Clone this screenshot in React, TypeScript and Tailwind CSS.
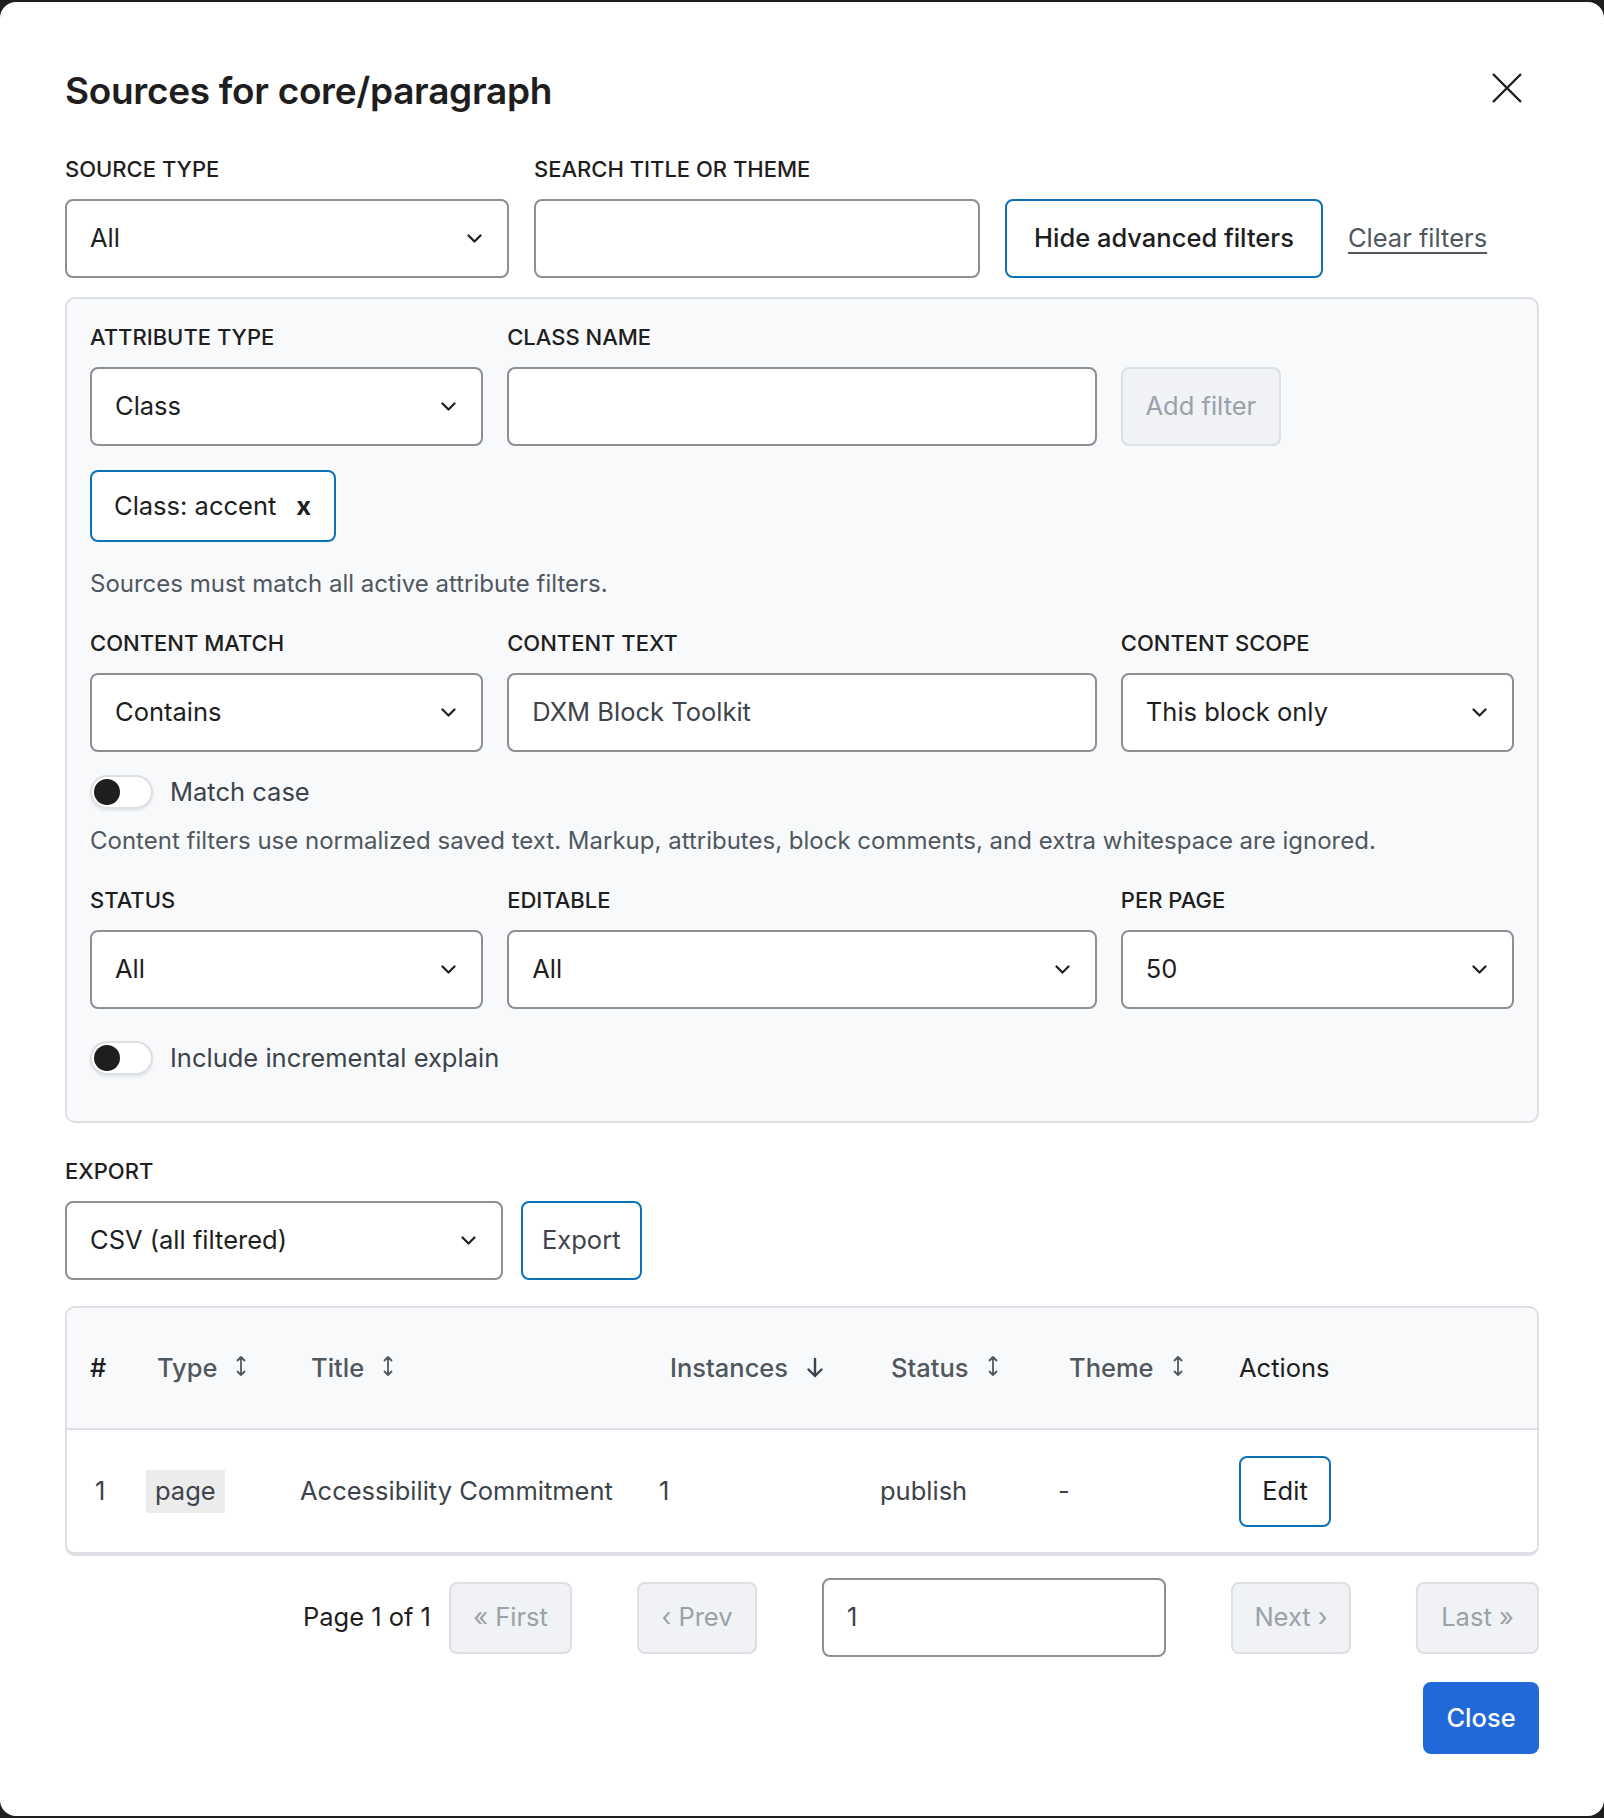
import React from "react";

const font = { fontFamily: "Inter, 'Noto Sans', sans-serif" };

function Chevron() {
  return (
    <svg width="15" height="9" viewBox="0 0 15 9" fill="none">
      <path d="M1.5 1.5l6 6 6-6" stroke="#1e1e1e" strokeWidth="2.2" strokeLinecap="round" strokeLinejoin="round" />
    </svg>
  );
}

function SortIcon() {
  return (
    <svg width="12" height="22" viewBox="0 0 12 22" fill="none" className="-mt-[4px]">
      <path d="M6 2v18M2.5 5.5L6 2l3.5 3.5M2.5 16.5L6 20l3.5-3.5" stroke="#50575e" strokeWidth="1.8" strokeLinecap="round" strokeLinejoin="round" />
    </svg>
  );
}

function DownArrow() {
  return (
    <svg width="18" height="22" viewBox="0 0 18 22" fill="none">
      <path d="M9 2v17M2.5 12.5L9 19l6.5-6.5" stroke="#3c434a" strokeWidth="2.4" strokeLinecap="round" strokeLinejoin="round" />
    </svg>
  );
}

function Label({ children }: { children: React.ReactNode }) {
  return (
    <div className="text-[22px] leading-[24px] font-medium uppercase text-[#1e1e1e] mb-[18px]">
      {children}
    </div>
  );
}

function Select({ value, className = "" }: { value: string; className?: string }) {
  return (
    <div
      className={`h-[79px] flex items-center justify-between pl-[23px] pr-[25px] bg-white border-2 border-[#8c8f94] rounded-[8px] text-[25.5px] text-[#1e1e1e] ${className}`}
    >
      <span>{value}</span>
      <Chevron />
    </div>
  );
}

function TextInput({ value = "", className = "" }: { value?: string; className?: string }) {
  return (
    <div
      className={`h-[79px] flex items-center pl-[23px] bg-white border-2 border-[#8c8f94] rounded-[8px] text-[25.5px] text-[#3c434a] ${className}`}
    >
      {value}
    </div>
  );
}

function Toggle({ label }: { label: string }) {
  return (
    <div className="flex items-center gap-[17px] h-[34px]">
      <div className="w-[63px] h-[34px] rounded-full bg-white border-2 border-[#dcdfe3] shadow-[0_2px_3px_rgba(0,0,0,0.08)] flex items-center pl-[2px]">
        <div className="w-[26px] h-[26px] rounded-full bg-[#1e1e1e]" />
      </div>
      <span className="text-[25.5px] leading-[34px] text-[#3c434a]">{label}</span>
    </div>
  );
}

function PageButton({ children, w }: { children: React.ReactNode; w: string }) {
  return (
    <div className={`h-[72px] ${w} flex items-center justify-center bg-[#f0f2f5] border-2 border-[#dcdfe3] rounded-[8px] text-[25.5px] text-[#9aa1a9]`}>
      {children}
    </div>
  );
}

function SortHeader({ label, icon }: { label: string; icon?: React.ReactNode }) {
  return (
    <div className="flex items-center gap-[18px] pl-[11px] text-[25.5px] font-medium text-[#50575e]">
      <span>{label}</span>
      {icon ?? <SortIcon />}
    </div>
  );
}

export default function App() {
  return (
    <div className="bg-[#1e1e1e] pt-[2px] min-h-[1818px]" style={font}>
      <div className="bg-white rounded-[16px] h-[1814px] px-[65px] pt-[68px]">
        {/* header */}
        <div className="flex items-start justify-between">
          <h1 className="text-[37px] leading-[42px] font-semibold text-[#1e1e1e] tracking-[-0.3px]">
            Sources for core/paragraph
          </h1>
          <button className="mr-[16px] mt-[2px]">
            <svg width="32" height="32" viewBox="0 0 32 32" fill="none">
              <path d="M2 2l28 28M30 2L2 30" stroke="#1e1e1e" strokeWidth="2.4" />
            </svg>
          </button>
        </div>

        {/* basic filters */}
        <div className="flex items-end gap-[25px] mt-[45px]">
          <div className="w-[444px]">
            <Label>Source type</Label>
            <Select value="All" />
          </div>
          <div className="w-[446px]">
            <Label>Search title or theme</Label>
            <TextInput />
          </div>
          <button className="h-[79px] px-[27px] border-2 border-[#0a73b7] rounded-[8px] bg-white text-[25.5px] font-medium text-[#1e1e1e]">
            Hide advanced filters
          </button>
          <a className="h-[79px] flex items-center text-[25.5px] text-[#50575e] underline underline-offset-[5px]">
            Clear filters
          </a>
        </div>

        {/* advanced panel */}
        <div className="mt-[19px] bg-[#f8f9fa] border-2 border-[#dcdfe3] rounded-[10px] px-[23px] pt-[26px] pb-[46px]">
          <div className="grid grid-cols-[2fr_3fr_2fr] gap-x-[24px] items-end">
            <div>
              <Label>Attribute type</Label>
              <Select value="Class" />
            </div>
            <div>
              <Label>Class name</Label>
              <TextInput />
            </div>
            <div>
              <button className="h-[79px] w-[160px] bg-[#f0f2f5] border-2 border-[#dcdfe3] rounded-[8px] text-[25.5px] text-[#9aa1a9]">
                Add filter
              </button>
            </div>
          </div>

          <div className="mt-[24px] inline-flex items-center gap-[20px] h-[72px] pl-[22px] pr-[23px] bg-white border-2 border-[#0a73b7] rounded-[8px] text-[25.5px] text-[#1e1e1e]">
            <span>Class: accent</span>
            <span className="font-bold">x</span>
          </div>

          <p className="mt-[28px] text-[24px] leading-[28px] text-[#50575e]">
            Sources must match all active attribute filters.
          </p>

          <div className="mt-[33px] grid grid-cols-[2fr_3fr_2fr] gap-x-[24px]">
            <div>
              <Label>Content match</Label>
              <Select value="Contains" />
            </div>
            <div>
              <Label>Content text</Label>
              <TextInput value="DXM Block Toolkit" />
            </div>
            <div>
              <Label>Content scope</Label>
              <Select value="This block only" />
            </div>
          </div>

          <div className="mt-[23px]">
            <Toggle label="Match case" />
          </div>

          <p className="mt-[18px] text-[24px] leading-[28px] text-[#50575e]">
            Content filters use normalized saved text. Markup, attributes, block comments, and extra whitespace are ignored.
          </p>

          <div className="mt-[33px] grid grid-cols-[2fr_3fr_2fr] gap-x-[24px]">
            <div>
              <Label>Status</Label>
              <Select value="All" />
            </div>
            <div>
              <Label>Editable</Label>
              <Select value="All" />
            </div>
            <div>
              <Label>Per page</Label>
              <Select value="50" />
            </div>
          </div>

          <div className="mt-[32px]">
            <Toggle label="Include incremental explain" />
          </div>
        </div>

        {/* export */}
        <div className="mt-[36px]">
          <Label>Export</Label>
          <div className="flex gap-[18px]">
            <Select value="CSV (all filtered)" className="w-[438px]" />
            <button className="h-[79px] px-[19px] border-2 border-[#0a73b7] rounded-[8px] bg-white text-[25.5px] text-[#3c434a]">
              Export
            </button>
          </div>
        </div>

        {/* table */}
        <div className="mt-[26px] border-2 border-b-[4px] border-[#dcdfe3] rounded-[10px] overflow-hidden">
          <div className="grid grid-cols-[56px_154px_359px_221px_178px_181px_1fr] items-center h-[122px] px-[23px] bg-[#f8f9fa] border-b-2 border-[#dcdfe3]">
            <div className="text-[25.5px] font-medium text-[#1e1e1e]">#</div>
            <SortHeader label="Type" />
            <SortHeader label="Title" />
            <SortHeader label="Instances" icon={<DownArrow />} />
            <SortHeader label="Status" />
            <SortHeader label="Theme" />
            <div className="text-[25.5px] text-[#1e1e1e]">Actions</div>
          </div>
          <div className="grid grid-cols-[56px_154px_359px_221px_178px_181px_1fr] items-center h-[122px] px-[23px] bg-white text-[25.5px] text-[#3c434a]">
            <div className="pl-[5px]">1</div>
            <div>
              <span className="inline-flex items-center h-[43px] px-[9px] bg-[#ececec]">page</span>
            </div>
            <div>Accessibility Commitment</div>
            <div>1</div>
            <div>publish</div>
            <div>-</div>
            <div>
              <button className="h-[71px] w-[92px] border-2 border-[#0a73b7] rounded-[8px] bg-white text-[25.5px] text-[#1e1e1e]">
                Edit
              </button>
            </div>
          </div>
        </div>

        {/* pagination */}
        <div className="mt-[22px] flex justify-end items-center gap-[65px]">
          <div className="flex items-center gap-[18px]">
            <span className="text-[25.5px] text-[#1e1e1e]">Page 1 of 1</span>
            <PageButton w="w-[123px]">« First</PageButton>
          </div>
          <PageButton w="w-[120px]">‹ Prev</PageButton>
          <TextInput value="1" className="w-[344px]" />
          <PageButton w="w-[120px]">Next ›</PageButton>
          <PageButton w="w-[123px]">Last »</PageButton>
        </div>

        <div className="mt-[25px] flex justify-end">
          <button className="h-[72px] w-[116px] bg-[#2168d8] rounded-[8px] text-[25.5px] font-medium text-white">
            Close
          </button>
        </div>
      </div>
    </div>
  );
}
